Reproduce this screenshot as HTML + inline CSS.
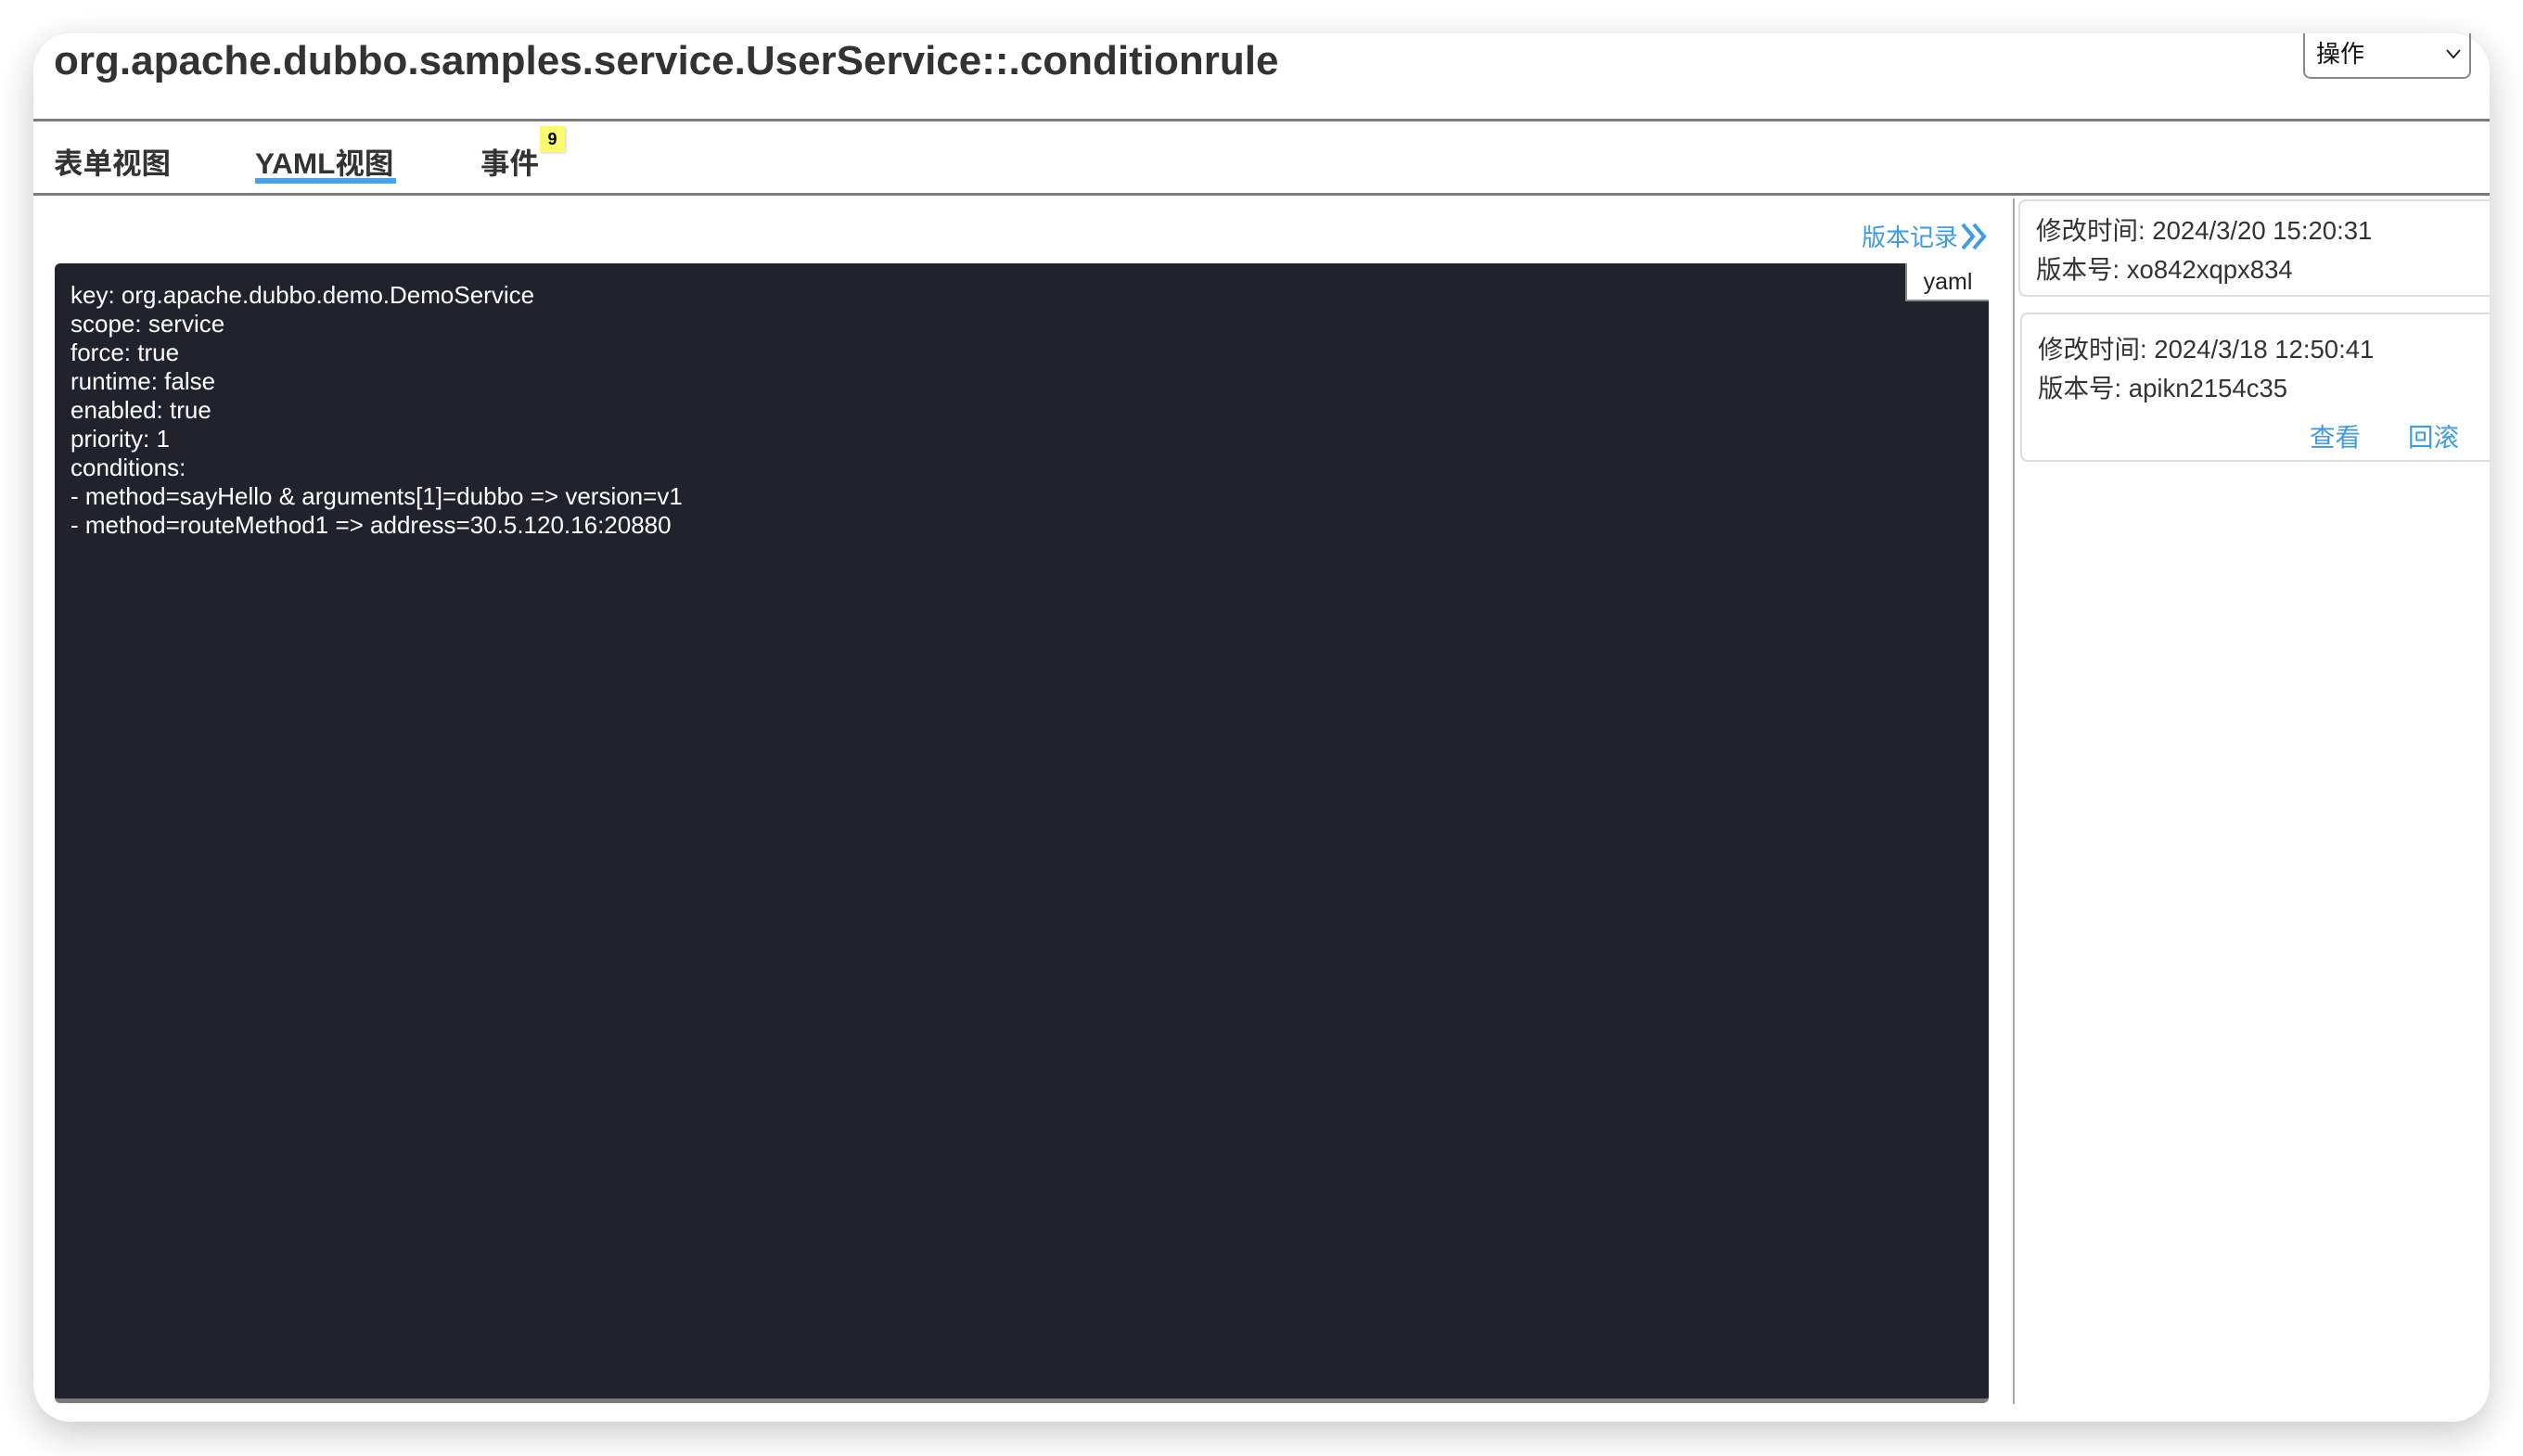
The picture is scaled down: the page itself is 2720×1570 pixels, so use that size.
<!DOCTYPE html>
<html><head><meta charset="utf-8"><style>
*{box-sizing:border-box;margin:0;padding:0}
body{width:2720px;height:1570px;background:#fff;font-family:"Liberation Sans","Noto Sans CJK SC",sans-serif;position:relative;overflow:hidden}
.card{position:absolute;left:36px;top:36px;width:2648px;height:1497px;background:#fff;border-radius:40px;box-shadow:0 12px 40px rgba(0,0,0,0.22)}
.abs{position:absolute}
.title{left:22px;top:1px;font-size:44px;font-weight:bold;color:#333;line-height:58px;white-space:nowrap}
.hl{left:0;width:2648px;height:3px;background:#7a7a7a}
.tab{font-size:31.5px;font-weight:bold;color:#333;top:120px;line-height:40px;white-space:nowrap}
.badge{left:546px;top:100px;width:27px;height:28px;background:#fafa6a;font-size:18px;font-weight:bold;text-align:center;line-height:28px;box-shadow:1px 1px 3px rgba(0,0,0,.2)}
.sel{left:2447px;top:0;width:181px;height:49px;border:2px solid #888;border-top:none;border-radius:0 0 8px 8px;font-size:26px;line-height:44px;padding-left:12px;color:#111}
.editor{left:23px;top:248px;width:2085px;height:1229px;background:#20232b;border-radius:6px;border-bottom:5px solid #7a7a7a}
.code{left:17px;top:19px;color:#fff;font-size:26px;line-height:31px;white-space:pre}
.yaml{right:0;top:0;width:90px;height:41px;background:#fff;border:2px solid #888;border-top:none;border-right:none;font-size:25px;text-align:center;line-height:40px;color:#222}
.link{color:#3d9be3}
.vc{border:2px solid #ddd;border-right:none;border-radius:8px 0 0 8px;font-size:27.5px;color:#333;line-height:42px;padding-left:17px}
</style></head><body>
<div class="card">
<div class="abs title">org.apache.dubbo.samples.service.UserService::.conditionrule</div>
<div class="abs sel">操作<svg class="abs" style="right:8px;top:16px" width="18" height="12" viewBox="0 0 18 12"><path d="M2 2l7 8 7-8" fill="none" stroke="#222" stroke-width="2"/></svg></div>
<div class="abs hl" style="top:92px"></div>
<div class="abs tab" style="left:22px">表单视图</div>
<div class="abs tab" style="left:239px">YAML视图</div>
<div class="abs" style="left:239px;top:156px;width:152px;height:6px;background:#4aa3e8"></div>
<div class="abs tab" style="left:482px">事件</div>
<div class="abs badge">9</div>
<div class="abs hl" style="top:172px"></div>
<div class="abs link" style="left:1971px;top:202px;font-size:26px;line-height:36px">版本记录<svg style="vertical-align:-6px;margin-left:2px" width="30" height="32" viewBox="0 0 30 32"><path d="M3 3l11 13-11 13M15 3l11 13-11 13" fill="none" stroke="#3d9be3" stroke-width="4"/></svg></div>
<div class="abs editor">
<div class="abs code">key: org.apache.dubbo.demo.DemoService
scope: service
force: true
runtime: false
enabled: true
priority: 1
conditions:
- method=sayHello &amp; arguments[1]=dubbo =&gt; version=v1
- method=routeMethod1 =&gt; address=30.5.120.16:20880</div>
<div class="abs yaml">yaml</div>
</div>
<div class="abs" style="left:2134px;top:178px;width:2px;height:1300px;background:#aaa"></div>
<div class="abs vc" style="left:2140px;top:179px;width:508px;height:105px;padding-top:11px">修改时间: 2024/3/20 15:20:31<br>版本号: xo842xqpx834</div>
<div class="abs vc" style="left:2142px;top:301px;width:506px;height:161px;padding-top:17px">修改时间: 2024/3/18 12:50:41<br>版本号: apikn2154c35
<div class="abs link" style="left:310px;top:112px;font-size:27.5px">查看</div>
<div class="abs link" style="left:416px;top:112px;font-size:27.5px">回滚</div>
</div>
</div>
</body></html>
